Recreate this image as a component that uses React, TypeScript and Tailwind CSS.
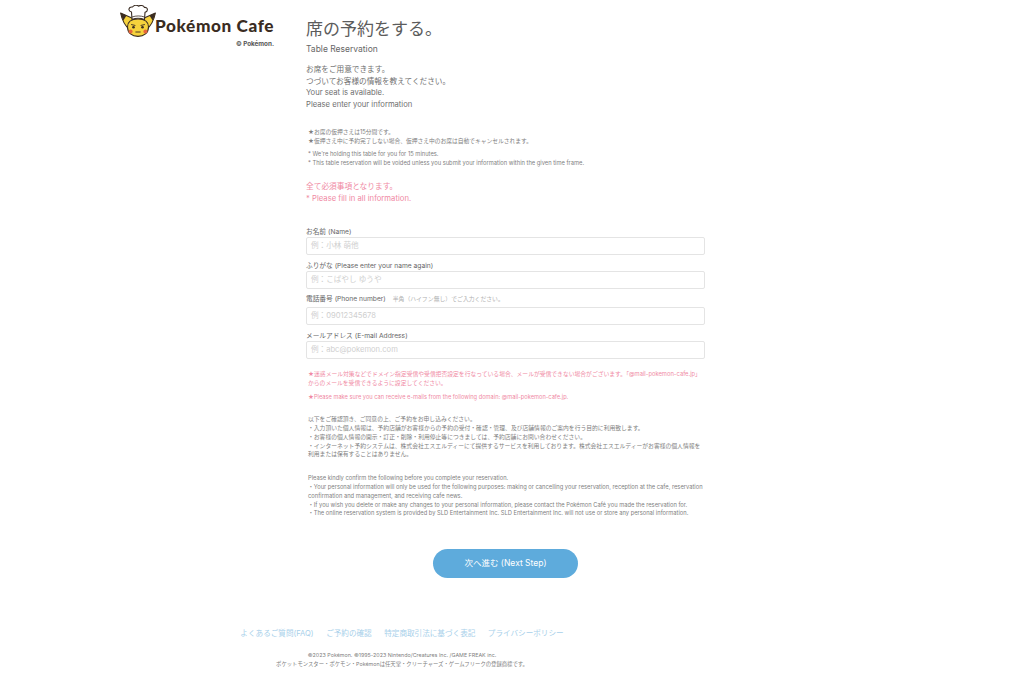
const cjk = "font-['Inter','Noto_Sans_CJK_JP',sans-serif]";

function Logo() {
  return (
    <div className="w-[155px]">
      <div className="flex items-center">
        <svg width="36" height="32" viewBox="0 0 36 32" className="shrink-0">
          <path d="M0.6 8 L13 13.5 L10 25 C5 21 2 15 0.6 8 Z" fill="#f6d23c" stroke="#3a2c22" strokeWidth="1.1" strokeLinejoin="round" />
          <path d="M35.4 8 L23 13.5 L26 25 C31 21 34 15 35.4 8 Z" fill="#f6d23c" stroke="#3a2c22" strokeWidth="1.1" strokeLinejoin="round" />
          <path d="M0.6 8 L6.5 10.6 L3.4 15.5 C2 13 1.1 10.5 0.6 8 Z" fill="#3a2c22" />
          <path d="M35.4 8 L29.5 10.6 L32.6 15.5 C34 13 34.9 10.5 35.4 8 Z" fill="#3a2c22" />
          <path d="M7.5 22 C7.5 16 12 14 18 14 C24 14 28.5 16 28.5 22 C28.5 28 24 31.4 18 31.4 C12 31.4 7.5 28 7.5 22 Z" fill="#f6d23c" stroke="#3a2c22" strokeWidth="1.1" />
          <path d="M11.5 7 C7.5 6 8.5 1.5 12.5 2 C14 0 17 -0.2 18.5 1.2 C20.5 -0.2 23.5 0.4 24.5 2.4 C28 2 28.5 6.5 25 7.4 L24.5 14.5 C20 12.8 16 12.8 12 14.5 Z" fill="#fff" stroke="#3a2c22" strokeWidth="1.1" strokeLinejoin="round" />
          <path d="M12 12 C16 10.6 20.5 10.6 24.5 12" fill="none" stroke="#3a2c22" strokeWidth="0.8" />
          <path d="M11.5 19.6 L15 20.4" stroke="#3a2c22" strokeWidth="0.9" strokeLinecap="round" />
          <path d="M24.5 19.6 L21 20.4" stroke="#3a2c22" strokeWidth="0.9" strokeLinecap="round" />
          <circle cx="13.5" cy="22.2" r="1.3" fill="#3a2c22" />
          <circle cx="22.5" cy="22.2" r="1.3" fill="#3a2c22" />
          <circle cx="10.6" cy="26.4" r="2" fill="#e8663c" />
          <circle cx="25.4" cy="26.4" r="2" fill="#e8663c" />
          <path d="M15.8 27 H20.2" stroke="#3a2c22" strokeWidth="0.9" strokeLinecap="round" />
        </svg>
        <span className="ml-[-1px] mt-[9px] whitespace-nowrap font-['Lato',sans-serif] text-[17.2px] font-black leading-none tracking-[0.6px] text-[#3a2c22]">
          Pokémon Cafe
        </span>
      </div>
      <p className="mt-[3px] pr-[1px] text-right font-['Inter',sans-serif] text-[6.3px] font-bold leading-[8px] text-[#555]">© Pokémon.</p>
    </div>
  );
}

function Field({ label, note, placeholder, labelGap }: { label: string; note?: string; placeholder: string; labelGap: string }) {
  return (
    <div>
      <div className={`flex items-baseline gap-[7px] leading-[10px] text-[#666] ${labelGap}`}>
        <span className="text-[6.7px]">{label}</span>
        {note && <span className="text-[5.85px] text-[#b0b0b0]">{note}</span>}
      </div>
      <div className="flex h-[18px] w-[399px] items-center rounded-[2px] border border-[#e4e4e4] bg-white px-[4px] text-[7.6px] text-[#cfcfcf]">
        {placeholder}
      </div>
    </div>
  );
}

export default function App() {
  return (
    <div className={`${cjk} min-h-[699px] bg-white pl-[120px] text-[#666]`}>
      <div className="flex items-start">
        <div className="w-[186px] pt-[5px]">
          <Logo />
        </div>
        <main className="w-[399px]">
          <h1 className="mt-[20px] text-[17px] leading-[18px] text-[#5c5c5c]">席の予約をする。</h1>
          <p className="mt-[5px] text-[8.5px] leading-[12px]">Table Reservation</p>

          <div className="mt-[9px] text-[7.65px] leading-[11.7px] text-[#707070]">
            <p>お席をご用意できます。</p>
            <p>つづいてお客様の情報を教えてください。</p>
            <p>Your seat is available.</p>
            <p>Please enter your information</p>
          </div>

          <div className="mt-[17px] pl-[2px] text-[5.75px] leading-[8.7px] text-[#808080]">
            <p>★お席の仮押さえは15分間です。</p>
            <p>★仮押さえ中に予約完了しない場合、仮押さえ中のお席は自動でキャンセルされます。</p>
          </div>
          <div className="mt-[5px] pl-[2px] text-[5.75px] leading-[8.7px] text-[#808080]">
            <p>* We're holding this table for you for 15 minutes.</p>
            <p>* This table reservation will be voided unless you submit your information within the given time frame.</p>
          </div>

          <div className="mt-[13px] text-[7.7px] leading-[12px] text-[#f08aa4]">
            <p>全て必須事項となります。</p>
            <p>* Please fill in all information.</p>
          </div>

          <div className="mt-[22px]">
            <Field label="お名前 (Name)" placeholder="例：小林 萌他" labelGap="" />
            <Field label="ふりがな (Please enter your name again)" placeholder="例：こばやし ゆうや" labelGap="mt-[6px]" />
            <Field label="電話番号 (Phone number)" note="半角（ハイフン無し）でご入力ください。" placeholder="例：09012345678" labelGap="mt-[5px] mb-[3px]" />
            <Field label="メールアドレス (E-mail Address)" placeholder="例：abc@pokemon.com" labelGap="mt-[6px]" />
          </div>

          <div className="mt-[10px] pl-[2px] text-[5.8px] leading-[9.5px] text-[#f08aa4]">
            <p>★迷惑メール対策などでドメイン指定受信や受信拒否設定を行なっている場合、メールが受信できない場合がございます。「@mail-pokemon-cafe.jp」からのメールを受信できるように設定してください。</p>
            <p className="mt-[4px] text-[5.7px]">★Please make sure you can receive e-mails from the following domain: @mail-pokemon-cafe.jp.</p>
          </div>

          <div className="mt-[14px] pl-[2px] text-[5.8px] leading-[8.8px] text-[#808080]">
            <p>以下をご確認頂き、ご同意の上、ご予約をお申し込みください。</p>
            <p>・入力頂いた個人情報は、予約店舗がお客様からの予約の受付・確認・管理、及び店舗情報のご案内を行う目的に利用致します。</p>
            <p>・お客様の個人情報の開示・訂正・削除・利用停止等につきましては、予約店舗にお問い合わせください。</p>
            <p>・インターネット予約システムは、株式会社エスエルディーにて提供するサービスを利用しております。株式会社エスエルディーがお客様の個人情報を利用または保有することはありません。</p>
          </div>

          <div className="mt-[15px] pl-[2px] text-[5.75px] leading-[8.8px] text-[#808080]">
            <p>Please kindly confirm the following before you complete your reservation.</p>
            <p>・Your personal information will only be used for the following purposes: making or cancelling your reservation, reception at the cafe, reservation confirmation and management, and receiving cafe news.</p>
            <p>・If you wish you delete or make any changes to your personal information, please contact the Pokémon Café you made the reservation for.</p>
            <p>・The online reservation system is provided by SLD Entertainment Inc. SLD Entertainment Inc. will not use or store any personal information.</p>
          </div>

          <button className="mx-auto mt-[31px] flex h-[29px] w-[145px] items-center justify-center rounded-full bg-[#5eabdc] text-[8.5px] text-white">
            次へ進む (Next Step)
          </button>
        </main>
      </div>

      <footer className="w-[564px]">
        <nav className="mt-[50px] flex justify-center gap-[12.5px] text-[7.6px] leading-[12px] text-[#a8d0ea]">
          <a>よくあるご質問(FAQ)</a>
          <a>ご予約の確認</a>
          <a>特定商取引法に基づく表記</a>
          <a>プライバシーポリシー</a>
        </nav>
        <div className="mt-[11px] text-center text-[5.35px] leading-[8.5px] text-[#808080]">
          <p>©2023 Pokémon. ©1995-2023 Nintendo/Creatures Inc. /GAME FREAK inc.</p>
          <p>ポケットモンスター・ポケモン・Pokémonは任天堂・クリーチャーズ・ゲームフリークの登録商標です。</p>
        </div>
      </footer>
    </div>
  );
}
